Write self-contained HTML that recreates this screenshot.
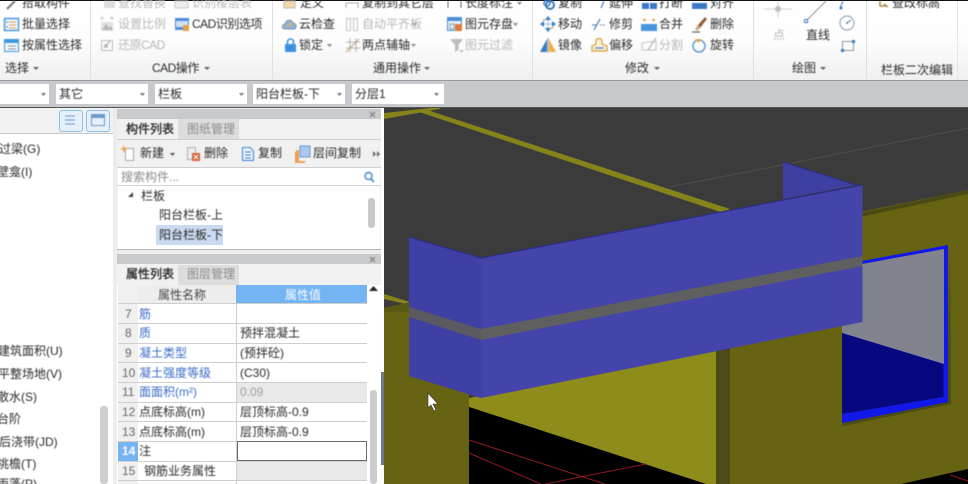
<!DOCTYPE html>
<html lang="zh">
<head>
<meta charset="utf-8">
<style>
html,body{margin:0;padding:0;background:#c8c9cd}
#r{position:relative;width:968px;height:484px;overflow:hidden;font:12px/16px "Liberation Sans","Noto Sans CJK SC",sans-serif;color:#2a2a2a;background:#c8c9cd}
#r div,#r svg{position:absolute}
.t{position:absolute;white-space:nowrap;line-height:16px}
.g{color:#b8b8b8}
.b{color:#3a6cc8}
.s{color:#666}
.c{letter-spacing:-.5px}
#txt{left:0;top:0;width:968px;height:484px;filter:blur(.45px)}
#ic{filter:blur(.4px)}
</style>
</head>
<body>
<div id="r">
<!-- 3D viewport -->
<svg style="left:0;top:0" width="968" height="484" viewBox="0 0 968 484">
<rect x="384" y="108" width="584" height="376" fill="#3b3b3b"/>
<path d="M669 187L783 165M792 163L968 128" stroke="#4e4e4e" stroke-width="1" fill="none"/>
<path d="M416 111L424 109L730 209L722 212.500Z" fill="#85831a"/>
<path d="M384 113L440 107V109L384 119Z" fill="#85831a"/>
<path d="M384 294L410 302V305L384 299Z" fill="#85831a"/>
<rect x="384" y="308" width="85" height="176" fill="#666413"/>
<path d="M384 308L410 302V312H384Z" fill="#5a5914"/>
<path d="M860 212L968 190V484H730V300Z" fill="#666413"/>
<path d="M860 213L968 190V194L860 217Z" fill="#4b4a14"/>
<path d="M469 398L716 350V484H706L469 407Z" fill="#8e8c1b"/>
<rect x="716" y="350" width="14" height="134" fill="#4b4a18"/>
<path d="M469 407L706 484H469Z" fill="#000"/>
<path d="M901 484L968 469V484Z" fill="#000"/>
<path d="M469 440L605 484M469 453L541 484M545 484L646 464M950 475L968 481" stroke="#8c1a22" stroke-width="1" fill="none"/>
<path d="M950 244L951 404L843 426L842 422L947 400Z" fill="#4d4c16"/>
<path d="M842 326V423L948 402V245L862 261Z" fill="#1218e8"/>
<path d="M862 264L944 249V364L842 333V326Z" fill="#83838f"/>
<path d="M842 333L943.500 364V397L842 414Z" fill="#08087e"/>
<path d="M783 162L856 185L783 199Z" fill="#3f3fa2"/>
<path d="M783 162L856 185" stroke="#2c2c84" stroke-width="1"/>
<path d="M409 237L481 258V398L409 376Z" fill="#4040a4"/>
<path d="M481 258L862.500 185V322L481 398Z" fill="#4444aa"/>
<path d="M409 237L481 258L862 185" stroke="#2d2d86" stroke-width="1.200" fill="none"/>
<path d="M409 307L481 329V340L409 317Z" fill="#5a5a60"/>
<path d="M481 329L862.500 256V266L481 340Z" fill="#5f5f5f"/>
<path d="M428 393V408L431 405L434 411L436 410L433 404L438 404Z" fill="#fff" stroke="#333" stroke-width=".6"/>
<rect x="381" y="108" width="3" height="376" fill="#fff"/>
<rect x="380" y="372" width="4" height="93" fill="#6f7a86"/>
</svg>

<!-- Ribbon -->
<div style="left:0;top:0;width:968px;height:80px;background:linear-gradient(#fff 0,#fdfdfd 50%,#eff0f0 100%)"></div>
<div style="left:0;top:0;width:968px;height:1px;background:#111"></div>
<div style="left:0;top:80px;width:968px;height:1px;background:#9a9a9c"></div>
<div style="left:90px;top:1px;width:1px;height:78px;background:#dfe0e0"></div>
<div style="left:272px;top:1px;width:1px;height:78px;background:#dfe0e0"></div>
<div style="left:532px;top:1px;width:1px;height:78px;background:#dfe0e0"></div>
<div style="left:753px;top:1px;width:1px;height:78px;background:#dfe0e0"></div>
<div style="left:866px;top:1px;width:1px;height:78px;background:#dfe0e0"></div>
<div style="left:957px;top:1px;width:1px;height:78px;background:#e6e6e6"></div>

<!-- combo boxes -->
<div style="left:0;top:84px;width:49px;height:20px;background:#fff"></div>
<div style="left:56px;top:84px;width:92px;height:20px;background:#fff"></div>
<div style="left:155px;top:84px;width:92px;height:20px;background:#fff"></div>
<div style="left:253px;top:84px;width:92px;height:20px;background:#fff"></div>
<div style="left:352px;top:84px;width:92px;height:20px;background:#fff"></div>
<div style="left:0;top:107px;width:968px;height:1px;background:#555"></div>

<!-- Left list panel -->
<div style="left:113px;top:108px;width:268px;height:376px;background:#ededee"></div>
<div style="left:0;top:108px;width:113px;height:376px;background:#fff"></div>
<div style="left:0;top:108px;width:113px;height:25px;background:#f1f1f1;border-bottom:1px solid #c8c8c8"></div>
<div style="left:59px;top:110px;width:22px;height:20px;border:1px solid #8fc0ea;border-radius:3px;background:#e6f0fa"></div>
<div style="left:86px;top:110px;width:22px;height:20px;border:1px solid #8fc0ea;border-radius:3px;background:#e6f0fa"></div>
<div style="left:100px;top:406px;width:8px;height:78px;background:#cfcfcf;border-radius:3px"></div>

<!-- Component list panel -->
<div style="left:117px;top:109px;width:264px;height:141px;background:#f1f1f1"></div>
<div style="left:117px;top:109px;width:264px;height:10px;background:#c9cacc"></div>
<div style="left:118px;top:119px;width:60px;height:21px;background:#f1f1f1"></div>
<div style="left:178px;top:119px;width:61px;height:20px;background:#dddddd"></div>
<div style="left:117px;top:139px;width:264px;height:1px;background:#d0d0d0"></div>
<div style="left:117px;top:167px;width:264px;height:1px;background:#d0d0d0"></div>
<div style="left:118px;top:168px;width:262px;height:17px;background:#fff"></div>
<div style="left:117px;top:185px;width:264px;height:1px;background:#d4d4d4"></div>
<div style="left:118px;top:186px;width:262px;height:63px;background:#fff"></div>
<div style="left:117px;top:249px;width:264px;height:1px;background:#b8b8b8"></div>
<div style="left:156px;top:225px;width:67px;height:20px;background:#cadaf0"></div>
<div style="left:368px;top:198px;width:7px;height:30px;background:#c8c8c8;border-radius:3px"></div>

<!-- Property panel -->
<div style="left:117px;top:254px;width:264px;height:230px;background:#fff"></div>
<div style="left:117px;top:254px;width:264px;height:10px;background:#c9cacc"></div>
<div style="left:117px;top:264px;width:264px;height:21px;background:#f1f1f1"></div>
<div style="left:178px;top:265px;width:61px;height:20px;background:#dddddd"></div>
<div style="left:118px;top:285px;width:20px;height:199px;background:#f0f0f0"></div>
<div style="left:138px;top:285px;width:98px;height:18px;background:#ededed"></div>
<div style="left:236px;top:285px;width:131px;height:18px;background:#74b4f2"></div>
<div style="left:236px;top:382px;width:131px;height:20px;background:#e9e9e9"></div>
<div style="left:236px;top:461px;width:131px;height:20px;background:#e9e9e9"></div>
<div style="left:118px;top:441px;width:20px;height:20px;background:#74b4f2"></div>
<div style="left:118px;top:303px;width:249px;height:1px;background:#cfcfcf"></div>
<div style="left:118px;top:323px;width:249px;height:1px;background:#cfcfcf"></div>
<div style="left:118px;top:343px;width:249px;height:1px;background:#cfcfcf"></div>
<div style="left:118px;top:362px;width:249px;height:1px;background:#cfcfcf"></div>
<div style="left:118px;top:382px;width:249px;height:1px;background:#cfcfcf"></div>
<div style="left:118px;top:402px;width:249px;height:1px;background:#cfcfcf"></div>
<div style="left:118px;top:421px;width:249px;height:1px;background:#cfcfcf"></div>
<div style="left:118px;top:441px;width:249px;height:1px;background:#cfcfcf"></div>
<div style="left:118px;top:461px;width:249px;height:1px;background:#cfcfcf"></div>
<div style="left:118px;top:480px;width:249px;height:1px;background:#cfcfcf"></div>
<div style="left:236px;top:303px;width:1px;height:181px;background:#cfcfcf"></div>
<div style="left:237px;top:441px;width:128px;height:18px;border:1px solid #6c6c6c;background:#fff"></div>
<div style="left:370px;top:390px;width:7px;height:94px;background:#cdcdcd;border-radius:3px"></div>

<!-- Icons -->
<svg id="ic" style="left:0;top:0" width="968" height="484" viewBox="0 0 968 484" fill="none">
<!-- row 0 clipped icons -->
<path d="M7 9L15 1" stroke="#777" stroke-width="2"/>
<path d="M104 1H115V8H104Z" fill="#ddd"/>
<path d="M175 1H188V8H175Z" stroke="#ccc" fill="#eee"/>
<path d="M284 1H295V8H284Z" fill="#f2d9a8" stroke="#bbb"/>
<path d="M346 3H358V8M346 3V8" stroke="#9aa"/>
<path d="M448 1V8M461 1V8" stroke="#667"/>
<circle cx="550" cy="5" r="4" stroke="#3a7bc0" stroke-width="2"/>
<circle cx="547" cy="3" r="3" stroke="#3a7bc0" stroke-width="1.500"/>
<path d="M601 8L604 1" stroke="#4a7fb8" stroke-width="1.200"/>
<rect x="642" y="3" width="7" height="6" fill="#3a78c8"/><rect x="650" y="3" width="7" height="6" fill="#3a78c8"/>
<rect x="692" y="3" width="15" height="6" fill="#3a78c8"/>
<path d="M880 1V6H886M884 4L888 7" stroke="#b08a50" stroke-width="1.500"/>
<!-- batch select -->
<rect x="4.500" y="18.500" width="14" height="12" fill="#eef5fc" stroke="#3f96dc" stroke-width="1.400"/>
<path d="M9 22H16M9 25H16M9 28H16" stroke="#e8a14a"/>
<path d="M6 22H8M6 27H8" stroke="#3f96dc"/>
<!-- attr select -->
<rect x="4.500" y="39.500" width="14" height="12" fill="#f4f8fc" stroke="#3f96dc" stroke-width="1"/>
<rect x="4" y="39" width="15" height="4" fill="#3f96dc"/>
<path d="M8 46H16M8 49H16" stroke="#7a93ab"/>
<!-- scale -->
<path d="M101 31V22H113V31Z" fill="#e2e2e2"/>
<path d="M102 30L106 24L109 28L111 26L113 30Z" fill="#b8b8b8"/>
<path d="M100 18H104M110 18H114M102 16V20M112 16V20" stroke="#c8c8c8"/>
<!-- CAD opts -->
<rect x="175" y="18" width="14" height="12" fill="#4a8fd8"/>
<rect x="176" y="21" width="12" height="6" fill="#cfe2f5"/>
<path d="M183 25H189V31H183Z" fill="#e8a14a"/>
<!-- restore -->
<rect x="101.500" y="40.500" width="11" height="10" stroke="#bdbdbd"/>
<path d="M104 48L110 41M104 45H107V48" stroke="#aaa" stroke-width="1.300"/>
<!-- cloud -->
<path d="M285 29C281 29 282 24 285 24C286 19 292 19 293 23C297 23 297 29 294 29Z" fill="#8fb2d4" stroke="#8893a0"/>
<path d="M287 26L292 24" stroke="#e8b25a" stroke-width="1.500"/>
<!-- lock -->
<rect x="285" y="44" width="11" height="8" rx="1" fill="#3d8fe0"/>
<path d="M287.500 44V42C287.500 38 293.500 38 293.500 42V44" stroke="#3d8fe0" stroke-width="1.600"/>
<!-- auto align -->
<rect x="346.500" y="18.500" width="4" height="12" stroke="#c2c2c2"/><rect x="353.500" y="18.500" width="4" height="12" stroke="#c2c2c2"/>
<!-- two point -->
<path d="M346 42H360M346 48H360M350 38V52M356 38V52" stroke="#b4b4b4"/>
<path d="M346 52L359 39" stroke="#c8a070"/>
<!-- save -->
<rect x="447.500" y="17.500" width="14" height="13" fill="#e8f1fa" stroke="#4a8fd8"/>
<rect x="447" y="17" width="15" height="4" fill="#4a8fd8"/>
<path d="M450 24H454V29H450Z" stroke="#7aa"/>
<rect x="455" y="24" width="7" height="7" fill="#e07a3a"/>
<!-- filter -->
<path d="M450 39H463L458.500 45V50L455 52V45Z" fill="#bdbdbd"/>
<rect x="460" y="50" width="3" height="2" fill="#bdbdbd"/>
<!-- move -->
<path d="M548 17V30M541 24H555" stroke="#9cc2e6" stroke-width="1"/>
<path d="M548 16L545 20H551ZM548 32L545 28H551ZM540 24L544 21V27ZM556 24L552 21V27Z" fill="#2f7cc8"/>
<circle cx="544" cy="20" r="1" fill="#e8a14a"/><circle cx="552" cy="28" r="1" fill="#e8a14a"/>
<!-- mirror -->
<path d="M540 52L547 39V52Z" fill="#3a7bc8"/>
<path d="M549 39L556 52H549Z" fill="#f0b040"/>
<path d="M548 38V53" stroke="#667" stroke-width=".7"/>
<!-- trim -->
<path d="M594 30L600 19" stroke="#3a7bc0" stroke-width="1.200"/>
<path d="M592 25H596" stroke="#3a7bc0"/><path d="M600 25H606" stroke="#889" stroke-dasharray="2 1"/>
<!-- offset -->
<path d="M592 51V46L596 44V40C596 38 602 38 602 41V44L607 46V51Z" fill="#fdf3d8" stroke="#d69a3a" stroke-width="1.200"/>
<path d="M595 48H604" stroke="#5a8fc8" stroke-width="1.500"/>
<!-- merge -->
<rect x="641" y="24" width="16" height="7" fill="#4a94e0"/>
<path d="M643 20H646M652 20H655M644.500 18.500V21.500M653.500 18.500V21.500" stroke="#e8a14a" stroke-width="1.300"/>
<!-- split -->
<path d="M642 49V43L656 41V50H642Z" stroke="#c4c4c4"/>
<path d="M648 50L656 38" stroke="#b4b4b4" stroke-width="1.200"/>
<!-- delete brush -->
<path d="M698 25L705 17L707 19L700 28Z" fill="#9a5c34"/>
<path d="M695 29L698 25L700 28L697 31Z" fill="#d4a37a"/>
<path d="M692 32H700" stroke="#444"/>
<!-- rotate -->
<circle cx="699" cy="46" r="6" stroke="#4a8fd0" stroke-width="1.300"/>
<path d="M695 39H701L699 43Z" fill="#f0a030"/>
<!-- point -->
<path d="M764 9H792M778 1V18" stroke="#d2d2d2"/>
<circle cx="778" cy="9" r="3" fill="#bdbdbd"/>
<!-- line -->
<path d="M807 20L826 1" stroke="#8a9098"/>
<rect x="804.500" y="19.500" width="3" height="3" stroke="#3a7bc0"/>
<path d="M840 8L843 1" stroke="#4a7fb8"/><circle cx="841" cy="8" r="1.500" fill="#3a7bc0"/>
<circle cx="847" cy="23" r="7" stroke="#9aa8b8" stroke-width="1.200"/>
<path d="M847 23L851 20" stroke="#3a7bc0"/><circle cx="847" cy="23" r="1" fill="#3a7bc0"/>
<rect x="842.500" y="41.500" width="11" height="9" stroke="#8a98a8"/>
<rect x="852" y="40" width="3" height="3" fill="#3a7bc0"/><rect x="841" y="49" width="3" height="3" fill="#3a7bc0"/>
<!-- combo arrows -->
<path d="M41 93H46L43.500 96ZM140 93H145L142.500 96ZM239 93H244L241.500 96ZM337 93H342L339.500 96ZM434 93H439L436.500 96Z" fill="#777"/>
<!-- section arrows -->
<path d="M33 67H39L36 70ZM204 67H210L207 70ZM424 67H430L427 70ZM654 67H660L657 70ZM820 67H826L823 70Z" fill="#666"/>
<path d="M327 44H332L329.500 47ZM411 44H416L413.500 47ZM513 23H518L515.500 26ZM517 2H522L519.500 5ZM412 23H417L414.500 26Z" fill="#888"/>
<!-- panel view buttons -->
<path d="M65 116H75M65 120H75M65 124H75" stroke="#6a9ac8"/>
<rect x="91.500" y="114.500" width="13" height="11" stroke="#6a9ac8"/><rect x="91" y="114" width="14" height="4" fill="#6a9ac8"/>
<!-- close x -->
<path d="M370 112L375 117M375 112L370 117M370 257L375 262M375 257L370 262" stroke="#777"/>
<!-- new -->
<path d="M125.500 148.500H133.500V160.500H125.500Z" fill="#fff" stroke="#a8a8a8"/>
<path d="M124 145L125 148L128 149L125 150L124 153L123 150L120 149L123 148Z" fill="#e8a14a"/>
<path d="M170 153H175L172.500 156Z" fill="#555"/>
<!-- delete -->
<path d="M187.500 147.500H195.500V159.500H187.500Z" fill="#eee" stroke="#b0b0b0"/>
<rect x="192" y="153" width="8" height="8" fill="#d4683a"/>
<path d="M194 155L198 159M198 155L194 159" stroke="#fff"/>
<!-- copy -->
<path d="M242.500 147.500H250L253.500 151V160.500H242.500Z" fill="#eaf3fb" stroke="#3f86cc"/>
<path d="M245 152H251M245 155H251M245 158H251" stroke="#3f86cc"/>
<!-- floor copy -->
<rect x="300" y="146" width="10" height="11" fill="#a8c8ee" stroke="#6a9ad0"/>
<path d="M295 152H299V161H305V163H295Z" fill="#eca050"/>
<path d="M296 150H299V156H296Z" fill="#eca050"/>
<!-- more -->
<path d="M373 151L376 154L373 157ZM377 151L380 154L377 157Z" fill="#666"/>
<!-- search -->
<circle cx="368.500" cy="176" r="3.500" stroke="#3f86cc" stroke-width="1.400"/>
<path d="M371 179L374 182" stroke="#3f86cc" stroke-width="1.600"/>
<!-- tree arrow -->
<path d="M133 192V197H128Z" fill="#444"/>
<!-- scroll up -->
<path d="M369 291L373.500 286L378 291Z" fill="#222"/>
</svg>

<!-- Text -->
<div id="txt">
<span class="t" style="left:22px;top:-5px">拾取构件</span>
<span class="t" style="left:22px;top:16px">批量选择</span>
<span class="t" style="left:22px;top:37px">按属性选择</span>
<span class="t" style="left:5px;top:60px">选择</span>
<span class="t g" style="left:118px;top:-5px">查找替换</span>
<span class="t g" style="left:192px;top:-5px">识别楼层表</span>
<span class="t g" style="left:118px;top:16px">设置比例</span>
<span class="t c" style="left:192px;top:16px">CAD识别选项</span>
<span class="t g c" style="left:118px;top:37px">还原CAD</span>
<span class="t c" style="left:152px;top:60px">CAD操作</span>
<span class="t" style="left:300px;top:-5px">定义</span>
<span class="t" style="left:362px;top:-5px">复制到其它层</span>
<span class="t" style="left:299px;top:16px">云检查</span>
<span class="t g" style="left:362px;top:16px">自动平齐板</span>
<span class="t" style="left:299px;top:37px">锁定</span>
<span class="t" style="left:362px;top:37px">两点辅轴</span>
<span class="t" style="left:373px;top:60px">通用操作</span>
<span class="t" style="left:465px;top:-5px">长度标注</span>
<span class="t" style="left:465px;top:16px">图元存盘</span>
<span class="t g" style="left:465px;top:37px">图元过滤</span>
<span class="t" style="left:558px;top:-5px">复制</span>
<span class="t" style="left:558px;top:16px">移动</span>
<span class="t" style="left:558px;top:37px">镜像</span>
<span class="t" style="left:609px;top:-5px">延伸</span>
<span class="t" style="left:609px;top:16px">修剪</span>
<span class="t" style="left:609px;top:37px">偏移</span>
<span class="t" style="left:659px;top:-5px">打断</span>
<span class="t" style="left:659px;top:16px">合并</span>
<span class="t g" style="left:659px;top:37px">分割</span>
<span class="t" style="left:710px;top:-5px">对齐</span>
<span class="t" style="left:710px;top:16px">删除</span>
<span class="t" style="left:710px;top:37px">旋转</span>
<span class="t" style="left:625px;top:60px">修改</span>
<span class="t g" style="left:773px;top:27px">点</span>
<span class="t" style="left:806px;top:27px">直线</span>
<span class="t" style="left:792px;top:60px">绘图</span>
<span class="t" style="left:892px;top:-5px">查改标高</span>
<span class="t" style="left:881px;top:62px">栏板二次编辑</span>

<span class="t" style="left:59px;top:86px">其它</span>
<span class="t" style="left:158px;top:86px">栏板</span>
<span class="t" style="left:256px;top:86px">阳台栏板-下</span>
<span class="t" style="left:355px;top:86px">分层1</span>

<span class="t" style="left:-1px;top:141px">过梁(G)</span>
<span class="t" style="left:-3px;top:164px">壁龛(I)</span>
<span class="t" style="left:-2px;top:343px">建筑面积(U)</span>
<span class="t" style="left:-2px;top:366px">平整场地(V)</span>
<span class="t" style="left:-3px;top:389px">散水(S)</span>
<span class="t" style="left:-3px;top:411px">台阶</span>
<span class="t" style="left:-1px;top:434px">后浇带(JD)</span>
<span class="t" style="left:-3px;top:456px">挑檐(T)</span>
<span class="t" style="left:-3px;top:476px">雨蓬(P)</span>

<span class="t" style="left:126px;top:121px;color:#222;-webkit-text-stroke:.3px #222">构件列表</span>
<span class="t" style="left:187px;top:121px;color:#8a8a8a">图纸管理</span>
<span class="t" style="left:140px;top:145px">新建</span>
<span class="t" style="left:204px;top:145px">删除</span>
<span class="t" style="left:258px;top:145px">复制</span>
<span class="t" style="left:313px;top:145px">层间复制</span>
<span class="t" style="left:121px;top:169px;color:#8a8a8a">搜索构件...</span>
<span class="t" style="left:141px;top:188px">栏板</span>
<span class="t" style="left:159px;top:207px">阳台栏板-上</span>
<span class="t" style="left:159px;top:227px">阳台栏板-下</span>

<span class="t" style="left:126px;top:266px;color:#222;-webkit-text-stroke:.3px #222">属性列表</span>
<span class="t" style="left:187px;top:266px;color:#8a8a8a">图层管理</span>
<span class="t" style="left:158px;top:287px;color:#444">属性名称</span>
<span class="t" style="left:285px;top:287px;color:#fff">属性值</span>

<span class="t s" style="left:125px;top:306px">7</span><span class="t b" style="left:139px;top:306px">筋</span>
<span class="t s" style="left:125px;top:325px">8</span><span class="t b" style="left:139px;top:325px">质</span><span class="t" style="left:240px;top:325px">预拌混凝土</span>
<span class="t s" style="left:125px;top:345px">9</span><span class="t b" style="left:139px;top:345px">凝土类型</span><span class="t" style="left:240px;top:345px">(预拌砼)</span>
<span class="t s" style="left:122px;top:365px">10</span><span class="t b" style="left:139px;top:365px">凝土强度等级</span><span class="t" style="left:240px;top:365px">(C30)</span>
<span class="t s" style="left:122px;top:384px">11</span><span class="t b" style="left:139px;top:384px">面面积(m²)</span><span class="t" style="left:240px;top:384px;color:#a0a0a0">0.09</span>
<span class="t s" style="left:122px;top:404px">12</span><span class="t" style="left:139px;top:404px">点底标高(m)</span><span class="t" style="left:240px;top:404px">层顶标高-0.9</span>
<span class="t s" style="left:122px;top:424px">13</span><span class="t" style="left:139px;top:424px">点底标高(m)</span><span class="t" style="left:240px;top:424px">层顶标高-0.9</span>
<span class="t" style="left:122px;top:443px;color:#fff;font-weight:bold">14</span><span class="t" style="left:139px;top:443px">注</span>
<span class="t s" style="left:122px;top:463px">15</span><span class="t" style="left:144px;top:463px">钢筋业务属性</span>
</div>
</div>
</body>
</html>
